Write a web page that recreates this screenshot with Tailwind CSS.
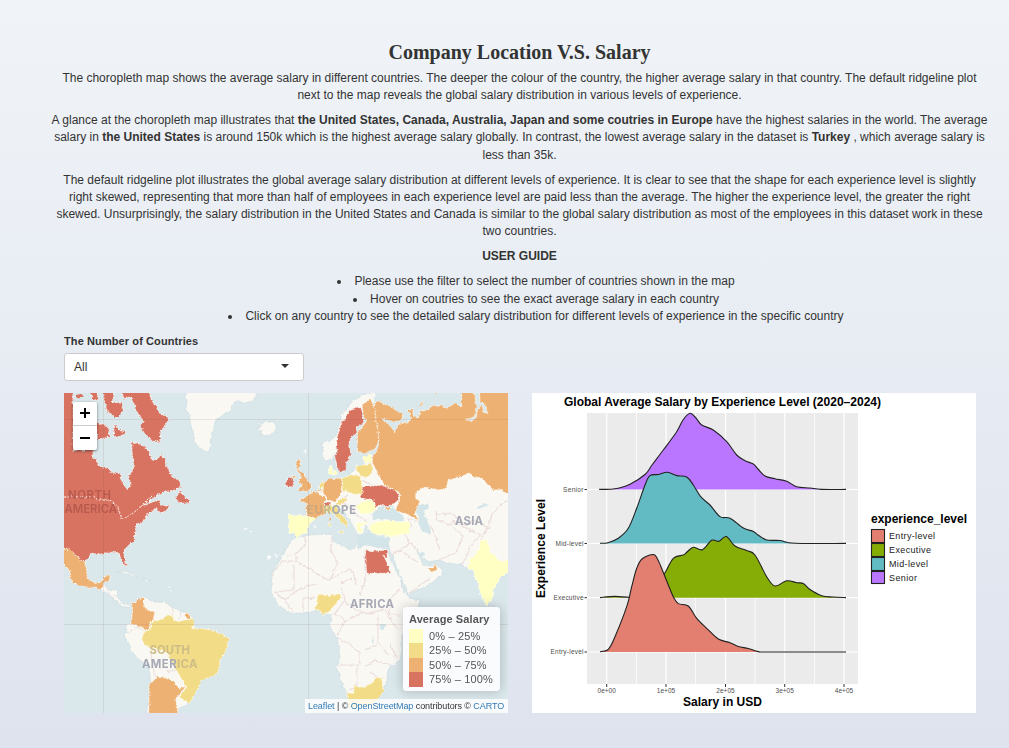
<!DOCTYPE html>
<html lang="en">
<head>
<meta charset="utf-8">
<title>Company Location V.S. Salary</title>
<script src="https://cdn.jsdelivr.net/npm/@tailwindcss/browser@4"></script>
</head>
<body class="h-[748px] w-[1009px] overflow-hidden bg-linear-to-b from-[#f0f4f8] to-[#dee3ee] font-['Liberation_Sans',Arial,sans-serif] text-xs leading-[17.14px] text-[#333]">
<main class="flex flex-col pt-[40px]">
  <header class="flex w-[937px] flex-col gap-2 self-start ml-[51px] text-center whitespace-nowrap">
    <h1 class="mb-[-2px] h-[24px] font-['Liberation_Serif',serif] text-[20px] leading-[24px] font-bold">Company Location V.S. Salary</h1>
    <p>The choropleth map shows the average salary in different countries. The deeper the colour of the country, the higher average salary in that country. The default ridgeline plot<br>next to the map reveals the global salary distribution in various levels of experience.</p>
    <p>A glance at the choropleth map illustrates that <b>the United States, Canada, Australia, Japan and some coutries in Europe</b> have the highest salaries in the world. The average<br>salary in <b>the United States</b> is around 150k which is the highest average salary globally. In contrast, the lowest average salary in the dataset is <b>Turkey</b> , which average salary is<br>less than 35k.</p>
    <p>The default ridgeline plot illustrates the global average salary distribution at different levels of experience. It is clear to see that the shape for each experience level is slightly<br>right skewed, representing that more than half of employees in each experience level are paid less than the average. The higher the experience level, the greater the right<br>skewed. Unsurprisingly, the salary distribution in the United States and Canada is similar to the global salary distribution as most of the employees in this dataset work in these<br>two countries.</p>
    <p class="font-bold">USER GUIDE</p>
    <ul class="list-inside list-disc pl-[33px]">
      <li>Please use the filter to select the number of countries shown in the map</li>
      <li>Hover on coutries to see the exact average salary in each country</li>
      <li>Click on any country to see the detailed salary distribution for different levels of experience in the specific country</li>
    </ul>
  </header>

  <section class="ml-16 mt-2 flex w-[240px] flex-col gap-[3px]">
    <label class="text-[11px] font-bold tracking-[0.1px]">The Number of Countries</label>
    <div class="flex h-[28px] items-center justify-between rounded-[3px] border border-[#ccc] bg-white pl-[9px] pr-[14px]">
      <span class="pt-px">All</span>
      <svg class="mb-[2px] h-[4px] w-[8px]" viewBox="0 0 8 4"><path d="M0 0h8L4 4z" fill="#333"/></svg>
    </div>
  </section>

  <section class="ml-16 mt-3 flex gap-6">
    <div class="relative h-[320px] w-[444px] overflow-hidden bg-[#dae7eb]">
      <svg class="block h-[320px] w-[444px]" viewBox="64 393 444 320">
        <defs>
          <filter id="coast" x="54" y="383" width="464" height="340" filterUnits="userSpaceOnUse" color-interpolation-filters="sRGB">
            <feTurbulence type="fractalNoise" baseFrequency="0.22" numOctaves="2" seed="4"/>
            <feDisplacementMap in="SourceGraphic" scale="4" xChannelSelector="R" yChannelSelector="G"/>
          </filter>
        </defs>
        <g filter="url(#coast)" stroke-linejoin="round">
          <!-- uncoloured land -->
          <g fill="#faf8f3" stroke="#cbdde3" stroke-width=".7">
            <path transform="translate(64 390) scale(.33333)" stroke-width="2" d="M358 -20L370 40 362 60 375 70 380 105 388 130 390 155 410 175 432 190 440 170 443 145 450 110 460 88 503 55 512 35 553 40 575 25 585 -20z"/>
            <path transform="translate(210 390) scale(.33333)" stroke-width="2" d="M135 100L150 98 150 108 160 97 180 94 192 97 200 115 190 130 165 138 150 133 155 122 138 118 150 110zM335 165L378 140 385 110 395 75 410 55 430 30 450 18 470 10 495 5 495 40 480 45 475 60 450 60 420 90 400 120 385 150 380 185 365 210 345 213 335 195 340 180z"/>
            <path d="M315 493L345 478 365 462 380 462 518 470 518 569 502 577 493 590 492 600 487 607 482 598 477 580 473 570 467 568 462 565 448 563 438 560 428 562 422 557 417 549 419 558 424 565 430 566 436 563 443 571 438 579 425 587 408 594 402 580 396 566 391 553 388 548 390 536 370 533 366 525 364 532 358 535 351 523 343 510 330 506z"/>
            <path d="M332 534L333 541 345 547 352 550 357 544 366 544 387 549 390 557 400 578 403 589 409 598 420 600 415 620 402 635 402 652 399 662 388 668 387 680 384 691 375 701 365 708 352 708 346 692 336 667 340 657 337 638 330 628 331 615 323 614 317 610 303 613 290 613 278 605 271 592 272 573 282 557 287 547 295 537 310 535z"/>
            <path transform="translate(64 550) scale(.33333)" stroke-width="2" d="M205 165L243 140 260 152 300 155 325 170 350 185 372 188 390 210 400 280 390 400 370 465 345 475 335 520 243 520 260 400 255 345 225 330 200 300 180 255 188 245 185 225 200 218zM105 117L120 100 130 118 160 120 160 140 175 160 200 165 200 172 175 170 150 150 130 130zM160 65L190 65 215 78 222 84 195 75zM235 88L262 90 250 96z"/>
            <path d="M489 606l4 1 0 6-3 1z"/>
          </g>
          <!-- national borders -->
          <g fill="none" stroke="#eadcdd" stroke-width="1.1">
            <path d="M287 556L296 554 305 545 305 536M296 556V561L282 561 272 575M296 561L328 580 350 569 353 572 356 585M332 536L331 552 338 562 331 578M365 550V573L366 578 360 595M294 565V590L275 592M275 592L285 600 296 591 305 587 318 583M285 601L293 611M303 612V599L316 598M341 583L352 578M342 588L345 600 335 614M345 602L358 611 370 614 384 609M331 615H340L345 622 337 635M345 622L360 613M337 638L350 644 360 654 360 665H337M365 667L375 660 390 665M357 666V685L349 690M370 672L378 678 368 690M378 615V642L388 655M385 610L398 630M400 590L388 600 390 615 400 615M377 645L365 650M390 644L397 658"/>
            <path d="M391 555L400 550 410 543 405 535 412 525M400 550L417 562M410 543L418 550M408 594L430 578M412 525L408 520 422 520M436 510L437 520 450 525 463 536 456 553 438 560M431 525L440 550M450 525L452 521 465 528 480 535 470 548 462 565M437 515L452 513 465 525 475 520 488 528 480 540M488 528L492 514 500 505 508 500M358 478L375 487M350 490L359 489M348 495L340 500 359 516 367 522"/>
            <path transform="translate(64 550) scale(.33333)" stroke-width="3" d="M190 250L220 230 245 245M260 300L265 345 275 385M310 365L340 360M325 170L325 195M350 185L345 208M130 118L140 138 160 140"/>
          </g>
          <!-- inland seas and lakes -->
          <g fill="#d4e5ea" transform="translate(358 390) scale(.33333)">
            <path d="M45 390L42 372 65 350 85 347 100 345 112 362 130 372 140 388 120 394 80 387zM180 345L210 340 212 355 195 365 205 385 218 415 215 432 195 430 185 405 182 380 172 360zM355 350L380 342 392 343 360 357zM0 430L35 430 55 442 95 440 92 468 60 475 20 465 0 480z"/>
            <path d="M180 487l15 0 5 10-15 0z"/>
          </g>
          <g fill="#d4e5ea"><path d="M379 626l5-3 2 3-4 4zM372 635l2 10-2-3z"/></g>

          <!-- 75% - 100% -->
          <g fill="#d87361" stroke="#fffaf6" stroke-width="3" stroke-dasharray="5 4">
            <path transform="translate(64 390) scale(.33333)" d="M-20 -10H25L27 30 28 180 86 180 88 205 100 212 103 228 125 232 150 250 170 250 175 280 190 298 198 290 197 255 210 235 205 200 203 155 225 160 240 172 255 185 262 210 275 212 292 190 300 205 312 235 325 262 345 270 353 290 335 300 300 305 270 320 235 350 265 335 285 330 290 345 320 350 290 368 275 355 250 372 240 395 215 405 215 430 210 450 180 480 178 490 188 528 180 525 165 490 140 485 110 492 80 490 62 520 40 500 15 480 -20 478z"/>
            <path transform="translate(64 390) scale(.33333)" d="M165 -15H250L262 30 285 65 315 85 300 110 288 130 292 155 270 155 238 125 228 110 240 95 215 60 205 25 180 25zM75 -15H105L102 30 85 30zM118 -15H155L145 35 175 40 175 65 155 85 130 65 120 30zM98 98L130 110 140 140 98 150zM150 105L168 120 185 128 165 140 148 138zM335 325L350 300 360 320 375 330 370 342 340 335z"/>
            <g transform="translate(210 390) scale(.33333)">
              <path d="M445 50L456 60 459 102 440 112 438 128 422 145 415 165 425 190 410 215 408 240 390 248 380 230 375 200 382 180 380 145 390 115 393 95 410 85 410 70 430 55zM230 270L245 260 252 275 245 290 228 292zM340 343L358 335 365 345 345 350z"/>
            </g>
            <path transform="translate(358 390) scale(.33333)" d="M5 325L12 300 20 290 75 285 90 295 110 300 123 312 122 330 100 345 80 348 65 345 50 358 52 340 40 328z"/>
            <path transform="translate(240 550) scale(.33333)" d="M376 0L400 3 440 0 442 25 430 15 453 70H380z"/>
          </g>
          <!-- 50% - 75% -->
          <g fill="#edb273" stroke="#fffaf0" stroke-width="3" stroke-dasharray="5 4">
            <g transform="translate(358 390) scale(.33333)">
              <path d="M50 40L60 32 90 48 130 70 132 88 110 95 80 85 72 88 95 105 110 125 120 110 130 100 155 95 158 80 150 60 165 55 165 75 180 85 185 62 200 62 230 48 250 45 265 55 290 40 310 50 312 -15H480V325L425 300 410 300 385 280 370 265 345 258 335 250 300 262 270 272 265 295 240 300 205 292 175 305 172 320 185 335 178 355 170 370 182 390 165 380 140 370 112 362 125 330 125 310 110 300 85 290 65 262 50 235 42 215 45 195 60 175 66 150 55 110 50 60z"/>
              <path d="M-2 128L25 95 15 70 12 45 35 28 50 50 55 100 65 150 50 178 20 188 -2 185zM78 352H98L92 362z"/>
              <path d="M180 45l12-10 4 8-12 8zM215 -5h25l-5 18z"/>
            </g>
            <g transform="translate(210 390) scale(.33333)">
              <path d="M258 215L272 207 270 225 265 235 280 250 290 270 305 285 298 300 270 305 265 300 275 285 265 278 272 262 265 245 258 235zM245 253L258 258 252 266zM268 330L290 318 310 303 325 310 350 325 340 345 345 370 310 385 290 375 288 340zM338 280L360 265 395 265 398 300 385 320 375 335 350 330 340 310zM312 298L335 298 335 308z"/>
              <path d="M355 385l5-3v10l-4-1z" stroke="none"/>
            </g>
            <g transform="translate(64 550) scale(.33333)">
              <path d="M-20 -2H15L40 20 65 40 68 60 70 85 85 95 105 98 115 95 122 78 140 75 135 90 120 100 112 112 105 117 85 113 60 110 30 100 15 85 20 70 5 45 -20 35zM205 175L202 160 225 150 243 140 237 165 250 180 272 185 268 210 258 215 255 243 230 230 200 218 207 200zM255 520L255 400 270 390 280 380 305 380 330 395 345 415 365 408 345 435 335 450 340 475 345 520zM362 195L372 188 380 200 370 208z"/>
            </g>
            <path transform="translate(395 550) scale(.33333)" d="M95 55L115 55 125 42 125 60 110 65z" stroke="none"/>
          </g>
          <!-- 25% - 50% -->
          <g fill="#f3dc87" stroke="#fffdf0" stroke-width="3" stroke-dasharray="5 4">
            <path transform="translate(64 550) scale(.33333)" d="M233 260L240 245 258 240 262 215 295 210 310 195 325 195 330 212 365 210 385 205 392 225 385 235 410 235 440 240 480 255 495 270 490 290 468 330 468 350 460 370 430 385 410 395 400 420 375 462 345 440 368 410 360 400 345 375 330 345 310 310 285 300 260 290 240 285z"/>
            <path transform="translate(240 550) scale(.33333)" d="M228 165L235 132 265 135 300 132 302 145 285 165 270 180 250 195 240 182 226 178zM320 428L340 430 342 405 360 415 395 400 410 382 425 385 430 425 395 470 325 475z"/>
            <path transform="translate(210 390) scale(.33333)" d="M325 290L335 275 343 280 338 294zM395 265L430 255 450 258 460 290 455 315 430 312 400 300zM375 345L385 330 410 322 410 335 390 345zM345 350L385 345 385 365 410 390 412 410 400 405 375 375 360 365 345 368zM385 425L400 422 398 432zM353 400L362 398 360 415zM440 228L485 220 489 240 472 262 450 258 442 243z"/>
          </g>
          <!-- 0% - 25% -->
          <g fill="#ffffc4" stroke="#fffff2" stroke-width="3" stroke-dasharray="5 4">
            <path transform="translate(358 390) scale(.33333)" d="M13 200L42 195 42 215 20 218zM-4 345L25 330 45 330 55 355 40 370 5 372zM35 405L60 395 90 390 120 395 155 395 155 428 100 440 60 435 38 425zM-4 398L28 396 20 405 8 410 14 425 -2 425z"/>
            <path transform="translate(210 390) scale(.33333)" d="M355 235L365 225 368 250 358 255zM370 245l10-2 0 10-8 0zM235 375L280 375 318 385 300 400 290 430 260 440 250 430 235 430z"/>
            <path transform="translate(358 390) scale(.33333)" d="M365 452L388 448 392 470 400 490 430 515 470 510V540L431 560 406 600 401 630 386 648 373 625 356 570 346 540 330 535 336 508 352 495 362 480z"/>
          </g>
          <!-- arctic inlets -->
          <g fill="#dae7eb" stroke="#fff8ef" stroke-width="2">
            <path transform="translate(358 390) scale(.33333)" d="M325 88L350 80 355 45 346 -5 364 -5 366 38 378 35 390 70 380 68 370 45 358 60 355 82 340 95z"/>
            <path transform="translate(64 390) scale(.33333)" d="M30 -5L72 -5 78 30 50 40 28 35z" stroke="none"/>
            <path transform="translate(64 390) scale(.33333)" d="M35 15l20-4 5 12-18 2z" fill="#d87361" stroke="none"/>
          </g>
          <g fill="none" stroke="#fff6ef" stroke-width="1" stroke-dasharray="2.4 1.2">
            <path d="M64 497H94L98 500 108 500 116 505 121 513V520L132 514 143 505 153 495"/>
          </g>
          <g fill="#fff">
            <path d="M243 529l3-1 1 2zM250 531h2v1h-2zM304 451l2-1v4zM267 557l4-1 0 3-3 1zM274 557l3-3-1 4zM168 587l2-1v2zM169 591h2v2zM313 526l4-1-1 2z"/>
          </g>
        </g>
        <!-- graticule -->
        <path d="M103.500 393V713M308.500 393V713M64 419.500H508M64 624.500H508" stroke="#78524c" stroke-opacity=".12" fill="none"/>
        <!-- continent labels -->
        <g font-family="Inter, sans-serif" font-weight="700" font-size="11.300" fill="#a6a8b5">
          <g fill="#b4574c" fill-opacity=".9">
            <text x="68" y="499" textLength="43" font-weight="600">NORTH</text>
            <text x="64.500" y="512.500" textLength="52.500" font-weight="600">AMERICA</text>
          </g>
          <text x="307" y="514.300" textLength="49"><tspan fill="#cba77e">EU</tspan><tspan fill="#c7b98c">R</tspan>OPE</text>
          <text x="455" y="525" textLength="28">ASIA</text>
          <text x="350" y="607.500" textLength="44">AFRICA</text>
          <text x="149.500" y="654" textLength="40.500" fill="#cdbd86">SOUTH</text>
          <text x="142" y="667.500" textLength="55.500">AMER<tspan fill="#cdbd86">ICA</tspan></text>
        </g>
      </svg>

      <!-- zoom control -->
      <div class="absolute left-[9px] top-[9px] flex w-[24px] flex-col rounded-[2px] bg-white shadow-[0_1px_3px_rgba(0,0,0,0.5)]">
        <span class="flex h-[24px] items-center justify-center border-b border-[#ccc]"><svg class="size-[10px]" viewBox="0 0 10 10"><path d="M0 5H10M5 0V10" stroke="#000" stroke-width="2"/></svg></span>
        <span class="flex h-[24px] items-center justify-center"><svg class="size-[10px]" viewBox="0 0 10 10"><path d="M0 5H10" stroke="#000" stroke-width="2"/></svg></span>
      </div>

      <!-- legend -->
      <div class="absolute left-[339px] top-[214px] h-[84px] w-[97px] rounded-[4px] bg-[#fcfcfe]/95 px-[6px] pt-[6px] text-[11px] text-[#555] shadow-[0_0_12px_rgba(0,0,0,0.22)]">
        <div class="mb-[3px] whitespace-nowrap text-[11px] leading-[13px] font-bold tracking-[0.1px]">Average Salary</div>
        <div class="flex gap-[6px]">
          <div class="flex w-[14px] flex-col *:h-[14.500px]"><i class="bg-[#ffffc4]"></i><i class="bg-[#f3dc87]"></i><i class="bg-[#edb273]"></i><i class="bg-[#d87361]"></i></div>
          <div class="flex flex-col whitespace-nowrap leading-[14.300px] tracking-[0.15px]"><span>0% – 25%</span><span>25% – 50%</span><span>50% – 75%</span><span>75% – 100%</span></div>
        </div>
      </div>

      <!-- attribution -->
      <div class="absolute bottom-0 right-0 h-[14px] w-[203px] whitespace-nowrap bg-white/80 pl-[3px] text-[9px] leading-[14px] tracking-[-0.07px] text-[#333]"><span class="text-[#337ab7]">Leaflet</span> | © <span class="text-[#337ab7]">OpenStreetMap</span> contributors © <span class="text-[#337ab7]">CARTO</span></div>
    </div>

    <svg class="block h-[320px] w-[444px] bg-white" viewBox="532 393 444 320" font-family="Liberation Sans, Arial, sans-serif">
      <rect x="587" y="413" width="271" height="271" fill="#ebebeb"/>
      <path d="M636.500 413V684M695.500 413V684M755 413V684M814.500 413V684" stroke="#fff" stroke-width=".7"/>
      <path d="M606.700 413V684M666 413V684M725.500 413V684M784.700 413V684M844 413V684M587 489.500H858M587 543.500H858M587 597.700H858M587 652H858" stroke="#fff" stroke-width="1.200"/>
      <path d="M606.700 684v3M666 684v3M725.500 684v3M784.700 684v3M844 684v3M584.500 489.500h2.500M584.500 543.500h2.500M584.500 597.700h2.500M584.500 652h2.500" stroke="#333"/>
      <g id="ridges"></g>
      <text x="564" y="406" font-size="12" font-weight="700" textLength="317">Global Average Salary by Experience Level (2020–2024)</text>
      <text x="683" y="706" font-size="12" font-weight="700" textLength="79">Salary in USD</text>
      <text transform="translate(545 598) rotate(-90)" font-size="12" font-weight="700" textLength="99">Experience Level</text>
      <g font-size="6.500" fill="#4d4d4d" text-anchor="end">
        <text x="583.500" y="491.700" textLength="20.500">Senior</text><text x="583.500" y="545.700" textLength="28">Mid-level</text><text x="583.500" y="600" textLength="30">Executive</text><text x="583.500" y="654.200" textLength="33">Entry-level</text>
      </g>
      <g font-size="6.500" fill="#4d4d4d" text-anchor="middle">
        <text x="606.700" y="692.500">0e+00</text><text x="666" y="692.500">1e+05</text><text x="725.500" y="692.500">2e+05</text><text x="784.700" y="692.500">3e+05</text><text x="844" y="692.500">4e+05</text>
      </g>
      <text x="871" y="523" font-size="12" font-weight="700" textLength="96">experience_level</text>
      <g stroke="#222" stroke-width="1.100">
        <rect x="871.500" y="529.500" width="13" height="13" fill="#e37f70"/>
        <rect x="871.500" y="543.500" width="13" height="13" fill="#86ac06"/>
        <rect x="871.500" y="557.500" width="13" height="13" fill="#62bac3"/>
        <rect x="871.500" y="571.500" width="13" height="12" fill="#bb76ff"/>
      </g>
      <g font-size="9" fill="#222">
        <text x="889" y="539" textLength="46">Entry-level</text><text x="889" y="553" textLength="42">Executive</text><text x="889" y="567" textLength="39">Mid-level</text><text x="889" y="581" textLength="28">Senior</text>
      </g>
    </svg>
  </section>
</main>
<script>
const ridges = [
  {fill:'#bb76ff', base:489.5, pts:[599,489.3,610,489.3,618,488.3,630,484.3,645,474.5,652,465,663.3,450,676.7,431.7,683,420,690,413.3,695.6,417.5,701.7,425,713.3,430,726.7,441.7,736.7,455,745,460.7,753.3,464,758,469,765,476,775,478.8,786.7,481.3,796.7,486.7,810,488,821.6,489.4,846,489.4]},
  {fill:'#62bac3', base:543.5, pts:[600,543.3,608,542.7,618.3,538.3,628.3,528.3,636.7,508.3,645,485,650,475.6,658.3,474.5,667.3,472.3,676.7,475.6,686.7,477,693.3,485,700.7,496.7,710,505,720,516.6,730,518.3,743.3,528,753.3,531.5,758,535,766.7,540,780,540.5,795,543.3,846,543.4]},
  {fill:'#86ac06', base:597.7, pts:[600,597.6,615,596.4,630,597.3,642,595,655,585,664.3,574,673.3,558.3,683.3,555,687,552,693.3,547.3,702.5,549.7,711.7,540.3,719,541.3,726.3,536.5,735,546,746.7,550.5,755,555,766.7,576.7,775,586,786.7,580.8,796.7,582.7,803.3,583.5,810,589.5,821.7,595.7,833,597,846,597.6]},
  {fill:'#e37f70', base:652, pts:[600,651.7,608.3,649.3,615,636.7,626.7,606.7,631.7,586.7,636.7,568.3,642,559,653.3,554.5,658,560,664.3,575,673.3,596.7,678.3,603.6,688.3,606,696.7,618.3,706.7,628.3,718.3,639,730,642.7,738.3,646.5,748.3,648.5,758.3,651.6,770,652,846,652]}
];
const smooth = p => {
  const n = p.length / 2, X = i => p[2 * Math.max(0, Math.min(n - 1, i))], Y = i => p[2 * Math.max(0, Math.min(n - 1, i)) + 1];
  let d = `M${X(0)} ${Y(0)}`;
  for (let i = 0; i < n - 1; i++)
    d += `C${X(i) + (X(i + 1) - X(i - 1)) / 6} ${Y(i) + (Y(i + 1) - Y(i - 1)) / 6} ${X(i + 1) - (X(i + 2) - X(i)) / 6} ${Y(i + 1) - (Y(i + 2) - Y(i)) / 6} ${X(i + 1)} ${Y(i + 1)}`;
  return d;
};
document.getElementById('ridges').innerHTML = ridges.map(r => {
  const d = smooth(r.pts);
  return `<path d="${d}V${r.base}H600z" fill="${r.fill}"/><path d="${d}" fill="none" stroke="#222" stroke-width="1.1"/>`;
}).join('');
</script>
</body>
</html>
